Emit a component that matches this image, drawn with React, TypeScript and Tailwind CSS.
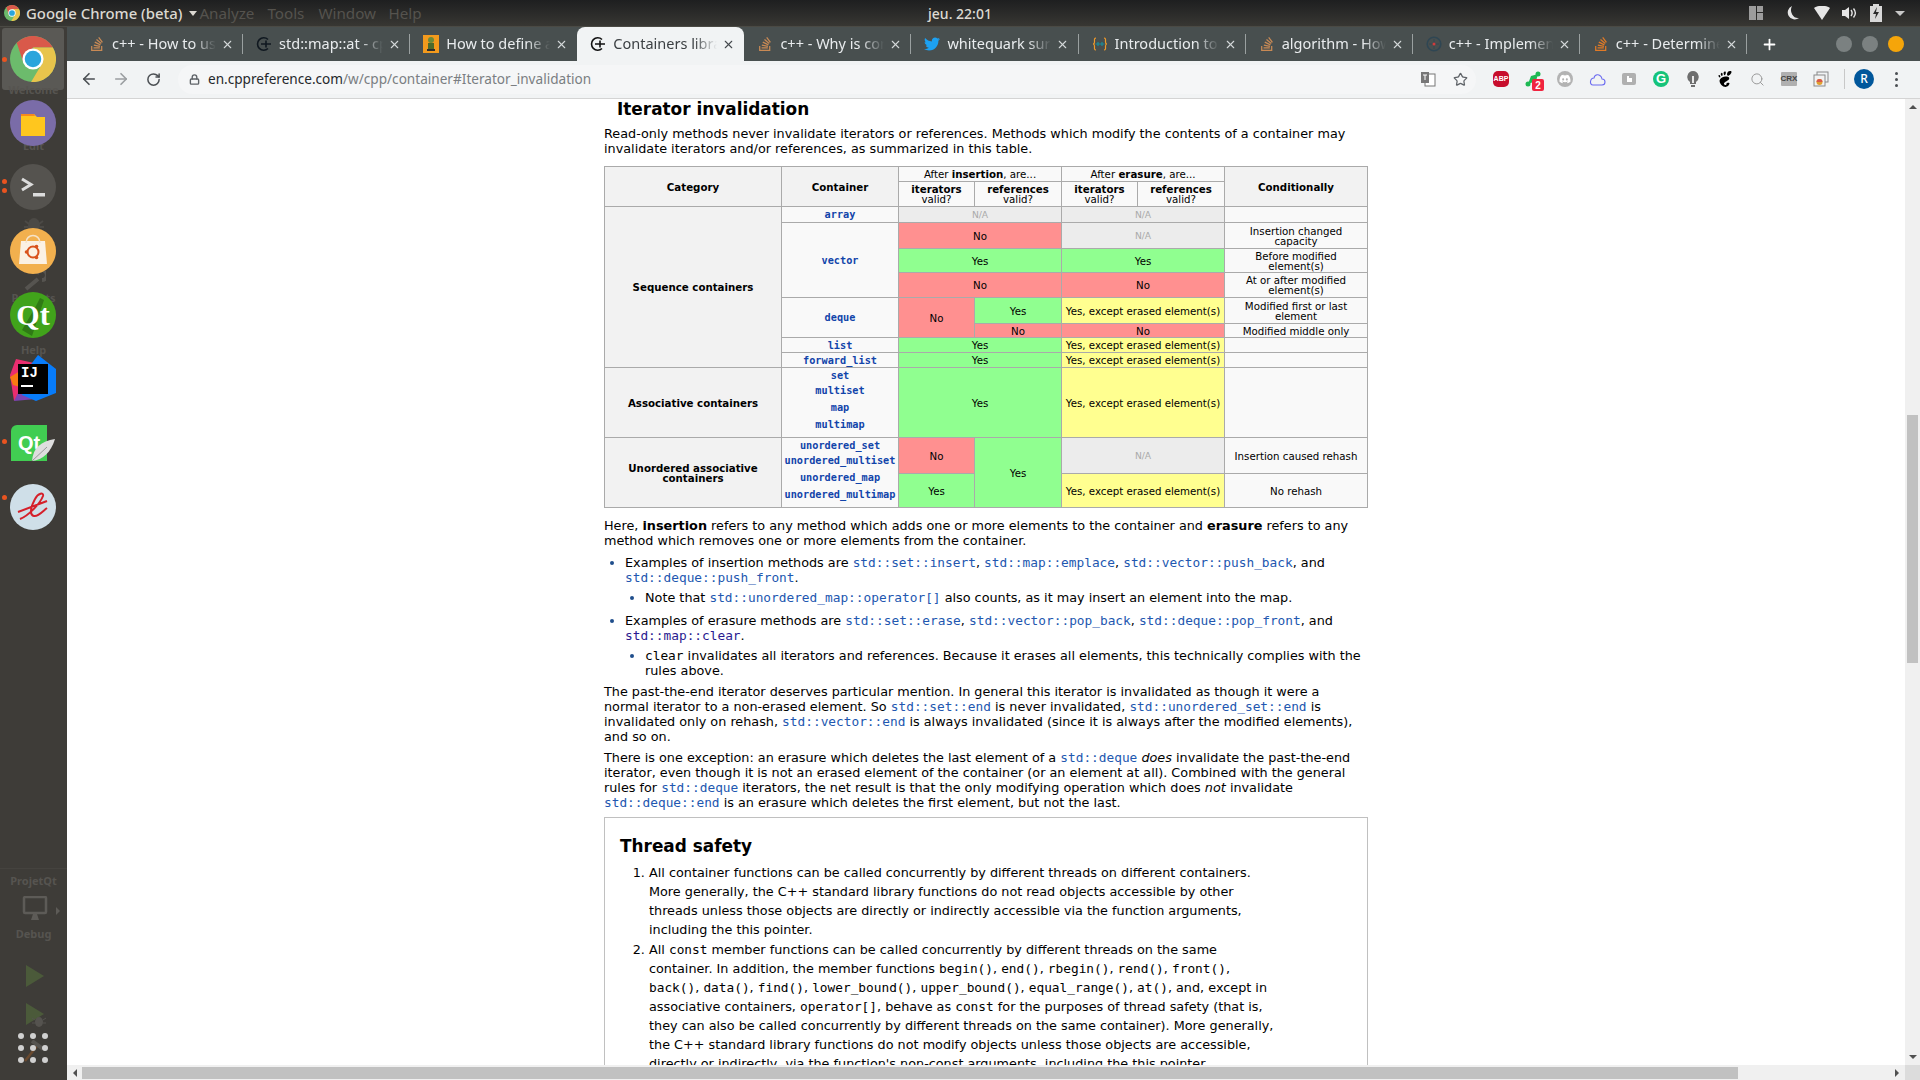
import React from "react";
import { ArrowLeft, ArrowRight, RotateCw, Lock, Star, Search, X, Plus } from "lucide-react";
import { FaTwitter, FaStackOverflow, FaDiscord } from "react-icons/fa";
import { SiGnome } from "react-icons/si";

const ChromeLogo = ({ size }: { size: number }) => (
  <svg width={size} height={size} viewBox="0 0 48 48">
    <circle cx="24" cy="24" r="24" fill="#6cbb6c" />
    <path d="M24 12H44.8A24 24 0 0 0 7 7L14 28Z" fill="#d9594a" />
    <path d="M44.8 12A24 24 0 0 1 22 48L34 28 24 12Z" fill="#e8c44c" />
    <circle cx="24" cy="24" r="11" fill="#fff" />
    <circle cx="24" cy="24" r="8.6" fill="#2aa5dc" />
  </svg>
);

const CppIcon = ({ color = "#111" }: { color?: string }) => (
  <svg width="16" height="16" viewBox="0 0 16 16" fill="none" stroke={color} strokeWidth="1.6">
    <path d="M12 3.5A6.2 6.2 0 1 0 12 12.5" />
    <path d="M5 8H15M10 4.5V11.5" />
  </svg>
);

const So = ({ dim }: { dim?: boolean }) => <FaStackOverflow className={dim ? "text-[#c98a55]" : "text-[#e07a27]"} size={16} />;

const TabIconOrange = () => (
  <svg width="16" height="18" viewBox="0 0 16 18">
    <rect width="16" height="18" fill="#f39a1d" />
    <circle cx="8" cy="5" r="3" fill="#6d8a3a" />
    <rect x="5" y="8" width="6" height="6" fill="#4c6a2c" />
    <rect x="4" y="14" width="8" height="2" fill="#2f2f2f" />
  </svg>
);
const BraceIcon = () => (
  <svg width="16" height="16" viewBox="0 0 16 16" fill="none" strokeWidth="1.2">
    <path d="M4 2C2 2 2.5 4 2.5 6S1 8 1 8 2.5 8 2.5 10 2 14 4 14M12 2C14 2 13.5 4 13.5 6S15 8 15 8 13.5 8 13.5 10 14 14 12 14" stroke="#f09a2a" />
    <path d="M3.5 8H12.5M6 6V10M10 6V10" stroke="#1b8d9c" />
  </svg>
);
const DimCircle = () => (
  <svg width="16" height="16" viewBox="0 0 16 16" fill="none">
    <circle cx="8" cy="8" r="6.8" stroke="#2f4653" strokeWidth="1.6" />
    <path d="M3 8H13M8 3V13" stroke="#2f4653" strokeWidth="0.8" />
    <circle cx="8" cy="8" r="1.5" fill="#d23b3b" />
  </svg>
);

const tabs: { icon: React.ReactNode; title: string; active?: boolean; noSep?: boolean }[] = [
  { icon: <So dim />, title: "c++ - How to use std::map" },
  { icon: <CppIcon color="#101820" />, title: "std::map::at - cppreference" },
  { icon: <TabIconOrange />, title: "How to define a custom", noSep: true },
  { icon: <CppIcon />, title: "Containers library - cpp", active: true, noSep: true },
  { icon: <So dim />, title: "c++ - Why is const" },
  { icon: <FaTwitter className="text-[#1da1f2]" size={16} />, title: "whitequark sur Twitter" },
  { icon: <BraceIcon />, title: "Introduction to the C++" },
  { icon: <So dim />, title: "algorithm - How does" },
  { icon: <DimCircle />, title: "c++ - Implementing" },
  { icon: <So />, title: "c++ - Determine if" },
];

const Tab = ({ t }: { t: (typeof tabs)[number] }) => (
  <div className={`relative flex h-full w-[167.1px] shrink-0 items-center pl-[13px] ${t.active ? "rounded-t-[8px] bg-[#f1f3f4] text-[#3c4043]" : "text-[#e9ecee]"}`}>
    <div className="flex w-[16px] justify-center">{t.icon}</div>
    <div className="ml-[7px] w-[104px] overflow-hidden whitespace-nowrap text-[14.5px] [mask-image:linear-gradient(to_right,black_78%,transparent)]" style={{ fontFamily: "'Noto Sans', sans-serif" }}>
      {t.title}
    </div>
    <X size={13} strokeWidth={2} className={`ml-[5px] ${t.active ? "text-[#45494d]" : "text-[#d4d8da]"}`} />
    {!t.active && !t.noSep && <div className="absolute right-0 top-[7px] h-[20px] w-px bg-[#9aa0a0]" />}
  </div>
);

const Ext = ({ children }: { children: React.ReactNode }) => (
  <div className="relative flex h-[28px] w-[32px] items-center justify-center">{children}</div>
);

const Dot = ({ y }: { y: number }) => (
  <div className="absolute left-[2px] h-[5px] w-[5px] rounded-full bg-[#e95420]" style={{ top: y }} />
);

const Ghost = ({ y, children }: { y: number; children: string }) => (
  <div className="absolute left-0 w-[67px] text-center text-[11px] font-bold text-[#565450]" style={{ top: y, fontFamily: "'Noto Sans', sans-serif" }}>
    {children}
  </div>
);

const DockItem = ({ children }: { children: React.ReactNode }) => (
  <div className="relative flex h-[64px] w-[66px] items-center justify-center">{children}</div>
);

const Sidebar = () => (
  <div className="relative w-[67px] shrink-0 overflow-hidden bg-[#3e3c38]">
    <div className="absolute left-[2px] top-[1px] h-[62px] w-[62px] rounded-[3px] bg-[#5a5955]" />
    <Ghost y={55}>Welcome</Ghost>
    <Ghost y={111}>Edit</Ghost>
    <Ghost y={263}>Projects</Ghost>
    <Ghost y={315}>Help</Ghost>
    <svg className="absolute left-[24px] top-[188px]" width="20" height="20" viewBox="0 0 20 20"><ellipse cx="10" cy="11" rx="6" ry="8" fill="#4c4a46" /><path d="M1 6 5 9M19 6 15 9M0 12H4M20 12H16" stroke="#4c4a46" strokeWidth="2" /></svg>
    <svg className="absolute left-[24px] top-[244px]" width="22" height="20" viewBox="0 0 22 20"><path d="M2 18 14 8M13 3a5 5 0 1 1 5 6" stroke="#565450" strokeWidth="4" fill="none" /></svg>
    <div className="relative flex flex-col">
      <DockItem><ChromeLogo size={46} /></DockItem>
      <DockItem>
        <svg width="46" height="46" viewBox="0 0 46 46">
          <circle cx="23" cy="23" r="23" fill="#7a6ca8" />
          <path d="M11 14H24L27 17H35V36H11Z" fill="#ffc61e" />
          <path d="M11 14H24L25 16H11Z" fill="#f5891f" />
        </svg>
      </DockItem>
      <DockItem>
        <svg width="46" height="46" viewBox="0 0 46 46" fill="none">
          <circle cx="23" cy="23" r="23" fill="#55534f" />
          <path d="M12 15 21 20.5 12 26" stroke="#dcdcdc" strokeWidth="3" />
          <rect x="23" y="29" width="12" height="3.5" fill="#dcdcdc" />
        </svg>
      </DockItem>
      <DockItem>
        <svg width="46" height="46" viewBox="0 0 46 46" fill="none">
          <circle cx="23" cy="23" r="23" fill="#f2b04e" />
          <path d="M11 13H35L37 36H9Z" fill="#fbf1e4" />
          <path d="M16 15C16 5 30 5 30 15" stroke="#f6e3c8" strokeWidth="1.5" />
          <circle cx="23" cy="24" r="5.5" stroke="#d9531e" strokeWidth="2" />
          <circle cx="16.5" cy="24" r="1.8" fill="#d9531e" />
          <circle cx="26.5" cy="18.5" r="1.8" fill="#d9531e" />
          <circle cx="26.5" cy="29.5" r="1.8" fill="#d9531e" />
        </svg>
      </DockItem>
      <DockItem>
        <div className="relative flex h-[46px] w-[46px] items-center justify-center overflow-hidden rounded-full bg-[#41a31b] text-[30px] font-bold leading-none text-white" style={{ fontFamily: "'Liberation Serif', serif" }}>
          <svg className="absolute left-0 top-0" width="46" height="46" viewBox="0 0 46 46"><path d="M12 38 22 44 34 8 30 6 26 14Z" fill="#2f7a15" /></svg>
          <span className="relative">Qt</span>
        </div>
      </DockItem>
      <DockItem>
        <div className="relative h-[48px] w-[46px]">
          <svg className="absolute left-0 top-0" width="46" height="48" viewBox="0 0 46 48">
            <path d="M6 4 24 8 18 30 4 46 0 20Z" fill="#ea2d6f" />
            <path d="M0 22 10 16 10 32 3 30Z" fill="#f97a12" />
            <path d="M4 46 14 26 26 44Z" fill="#7b44b5" />
            <path d="M28 0 46 14 46 38 26 46 12 40 16 16Z" fill="#087cfa" />
          </svg>
          <div className="absolute left-[8px] top-[9px] h-[30px] w-[30px] bg-black px-[3px] pt-[2px] text-[14px] font-bold leading-[14px] text-white" style={{ fontFamily: "'Liberation Mono', monospace" }}>
            IJ
            <div className="mt-[5px] h-[2px] w-[12px] bg-white" />
          </div>
        </div>
      </DockItem>
      <DockItem>
        <div className="relative h-[37px] w-[44px]">
          <div className="flex h-[36px] w-[36px] items-center justify-center rounded-tl-[6px] bg-[#41cd52] text-[20px] font-bold leading-none text-white" style={{ fontFamily: "'Liberation Sans', sans-serif" }}>Qt</div>
          <svg className="absolute right-0 top-[13px]" width="24" height="24" viewBox="0 0 24 24"><path d="M24 1C10 3 2 10 1 23 12 22 20 14 24 1Z" fill="#dedede" /><path d="M1 23 16 9" stroke="#999" /></svg>
        </div>
      </DockItem>
      <DockItem>
        <svg width="46" height="46" viewBox="0 0 46 46" fill="none">
          <circle cx="23" cy="23" r="23" fill="#cfdfe8" />
          <path d="M10 35C18 32 30 20 33 12 34 8 28 9 25 15 21 22 19 31 24 32 28 33 33 27 37 24M8 28 37 17" stroke="#d5202a" strokeWidth="2" />
        </svg>
      </DockItem>
    </div>
    <div className="absolute left-0 top-[841px] h-[1px] w-full bg-[#45433f]" />
    <Ghost y={846}>ProjetQt</Ghost>
    <svg className="absolute left-[22px] top-[869px]" width="26" height="26" viewBox="0 0 26 26" fill="none"><rect x="2" y="1" width="22" height="16" rx="1" stroke="#5d5b57" strokeWidth="2.5" /><path d="M9 24 11 18H15L17 24Z" fill="#5d5b57" /></svg>
    <div className="absolute left-[56px] top-[880px] h-0 w-0 border-y-[4px] border-l-[4px] border-y-transparent border-l-[#5d5b57]" />
    <Ghost y={899}>Debug</Ghost>
    <div className="absolute left-[26px] top-[938px] h-0 w-0 border-y-[11px] border-l-[18px] border-y-transparent border-l-[#4b5a3a]" />
    <div className="absolute left-[26px] top-[976px] h-0 w-0 border-y-[11px] border-l-[18px] border-y-transparent border-l-[#4b5a3a]" />
    <svg className="absolute left-[32px] top-[987px]" width="14" height="14" viewBox="0 0 14 14"><ellipse cx="7" cy="8" rx="4" ry="5" fill="#55534f" /><path d="M0 4 3 6M14 4 11 6M0 9H3M14 9H11" stroke="#55534f" /></svg>
    <svg className="absolute left-[24px] top-[1013px]" width="20" height="22" viewBox="0 0 20 22" fill="none"><path d="M1 21 13 6" stroke="#6b4a2f" strokeWidth="2.5" /><path d="M8 1 19 9" stroke="#565450" strokeWidth="4" /></svg>
    <div className="absolute left-[18px] top-[1006px] grid grid-cols-3 gap-x-[6px] gap-y-[6px]">
      {Array.from({ length: 9 }).map((_, i) => (
        <div key={i} className="h-[6px] w-[6px] rounded-full bg-[#d0d0d0]" />
      ))}
    </div>
    <Dot y={30} />
    <Dot y={152} />
    <Dot y={161} />
    <Dot y={412} />
    <Dot y={468} />
  </div>
);

const TopBar = () => (
  <div className="relative flex h-[27px] shrink-0 items-center border-b border-[#4b4a44] bg-gradient-to-b from-[#1e1f20] to-[#383733] text-[#dcd9d2]" style={{ fontFamily: "'Noto Sans', sans-serif" }}>
    <div className="ml-[4px]"><ChromeLogo size={16} /></div>
    <span className="ml-[6px] text-[14.9px] font-medium leading-none">Google Chrome (beta)</span>
    <div className="ml-[7px] h-0 w-0 border-x-[4.5px] border-t-[5px] border-x-transparent border-t-[#dcd9d2]" />
    <div className="ml-[2px] flex text-[15.2px] text-[#55534e]">
      <span className="w-[68px]">Analyze</span>
      <span className="w-[51px]">Tools</span>
      <span className="w-[70px]">Window</span>
      <span>Help</span>
    </div>
    <div className="absolute left-0 right-0 top-[5px] text-center text-[14px] font-medium leading-[17px]">jeu. 22:01</div>
    <div className="ml-auto flex items-center">
      <svg width="16" height="16" viewBox="0 0 16 16" fill="#9c9c9c" className="mr-[21px]"><rect x="1" y="1" width="7" height="14" /><rect x="9" y="1" width="6" height="6" /><rect x="9" y="8" width="6" height="7" /></svg>
      <svg width="16" height="16" viewBox="0 0 16 16" fill="#e6e6e6" className="mr-[13px]"><path d="M7 1A7 7 0 1 0 14 13 7 8 0 0 1 7 1Z" /></svg>
      <svg width="16" height="14" viewBox="0 0 16 14" fill="#e6e6e6" className="mr-[12px]"><path d="M0 2C4-1 12-1 16 2L8 14Z" /></svg>
      <svg width="16" height="14" viewBox="0 0 16 14" fill="none" className="mr-[12px]"><path d="M0 4H3L7 1V13L3 10H0Z" fill="#e6e6e6" /><path d="M9 4C10.5 6 10.5 8 9 10M11.5 2.5C14 5.5 14 8.5 11.5 11.5" stroke="#e6e6e6" strokeWidth="1.4" /></svg>
      <svg width="12" height="18" viewBox="0 0 12 18" className="mr-[13px]"><path d="M0 2H3V0H9V2H12V18H0Z" fill="#d8d8d8" /><path d="M7 3 3 10H6L5 15 9 8H6Z" fill="#2a2a2a" /></svg>
      <div className="mr-[15px] h-0 w-0 border-x-[5px] border-t-[5px] border-x-transparent border-t-[#c8c8c8]" />
    </div>
  </div>
);

const TabBar = () => (
  <div className="flex h-[34px] shrink-0 items-center bg-[#484f4f] pl-[9px]">
    {tabs.map((t) => <Tab key={t.title} t={t} />)}
    <Plus size={17} strokeWidth={2.5} className="ml-[14px] text-white" />
    <div className="ml-[58px] h-[16px] w-[16px] rounded-full bg-[#7b8181]" />
    <div className="ml-[10px] h-[16px] w-[16px] rounded-full bg-[#7b8181]" />
    <div className="ml-[10px] h-[16px] w-[16px] rounded-full bg-[#f5a50a]" />
  </div>
);

const Toolbar = () => (
  <div className="flex h-[38px] shrink-0 items-center border-b border-[#d4d4d4] bg-[#f1f3f4] pb-[1px] pl-[6px]">
    <div className="flex w-[32px] justify-center"><ArrowLeft size={18} strokeWidth={2.2} className="text-[#4b4f53]" /></div>
    <div className="flex w-[32px] justify-center"><ArrowRight size={18} strokeWidth={2.2} className="text-[#9a9da0]" /></div>
    <div className="flex w-[32px] justify-center"><RotateCw size={15} strokeWidth={2.4} className="text-[#4b4f53]" /></div>
    <div className="ml-[9px] flex h-[29px] w-[1298px] items-center rounded-full bg-[#f5f6f7] pl-[11px]">
      <Lock size={11} strokeWidth={3} className="text-[#5f6368]" />
      <div className="ml-[8px] text-[13.6px] text-[#7a7e82]" style={{ fontFamily: "'Noto Sans', sans-serif" }}>
        <span className="text-[#25282b]">en.cppreference.com</span>/w/cpp/container#Iterator_invalidation
      </div>
      <div className="ml-auto flex">
        <Ext>
          <svg width="16" height="16" viewBox="0 0 16 16"><rect x="5" y="3" width="10" height="12" fill="#fff" stroke="#777" /><rect x="1" y="1" width="8" height="11" fill="#777" /><path d="M3 4H7M5 4V9M9 8 13 12" stroke="#fff" /></svg>
        </Ext>
        <Ext><Star size={15} strokeWidth={2} className="text-[#5f6368]" /></Ext>
      </div>
    </div>
    <div className="ml-[9px] flex">
      <Ext>
        <div className="flex h-[16px] w-[16px] items-center justify-center rounded-[5px] bg-[#c70d2c] text-[7px] font-bold text-white" style={{ fontFamily: "'Liberation Sans', sans-serif" }}>ABP</div>
      </Ext>
      <Ext>
        <svg width="16" height="16" viewBox="0 0 16 16" fill="#1eb954"><circle cx="3" cy="13" r="2.5" /><circle cx="13" cy="3" r="2.5" /><path d="M3 13 6 5 13 3 11 10Z" /></svg>
        <div className="absolute left-[15px] top-[14px] flex h-[12px] w-[12px] items-center justify-center rounded-[2px] bg-[#f0243f] text-[10px] font-bold text-white" style={{ fontFamily: "'Liberation Sans', sans-serif" }}>2</div>
      </Ext>
      <Ext><div className="flex h-[16px] w-[16px] items-center justify-center rounded-full bg-[#b3b3b3]"><FaDiscord size={12} className="text-white" /></div></Ext>
      <Ext>
        <svg width="17" height="13" viewBox="0 0 17 13" fill="none" stroke="#6b6bf0" strokeWidth="1.1"><path d="M4 12H13C17 12 17 6 13 6 12 1 6 0 5 5 1 5 0 12 4 12Z" /></svg>
      </Ext>
      <Ext>
        <svg width="14" height="12" viewBox="0 0 14 12"><rect width="14" height="12" rx="2" fill="#b0b0b0" /><path d="M5 3V9H10V5H7V3Z" fill="#fff" /></svg>
      </Ext>
      <Ext><div className="flex h-[16px] w-[16px] items-center justify-center rounded-full bg-[#15c37a] text-[13px] font-bold text-white" style={{ fontFamily: "'Liberation Sans', sans-serif" }}>G</div></Ext>
      <Ext>
        <svg width="12" height="16" viewBox="0 0 12 16"><path d="M6 0A6 6 0 0 1 9 11V13H3V11A6 6 0 0 1 6 0Z" fill="#6e6e6e" /><rect x="4" y="14" width="4" height="2" fill="#6e6e6e" /><rect x="5" y="5" width="2" height="7" fill="#e8e8e8" /></svg>
      </Ext>
      <Ext><SiGnome size={16} className="text-black" /></Ext>
      <Ext><Search size={15} strokeWidth={1.6} className="text-[#9a9a9a]" /></Ext>
      <Ext><div className="flex h-[14px] w-[16px] items-center justify-center rounded-[1px] bg-[#b0b0b0] text-[8px] font-bold text-[#444]" style={{ fontFamily: "'Liberation Sans', sans-serif" }}>CRX</div></Ext>
      <Ext>
        <svg width="16" height="16" viewBox="0 0 16 16" fill="none"><rect x="4" y="1" width="11" height="10" stroke="#8a8a8a" /><rect x="1" y="4" width="11" height="11" fill="#f2f2f2" stroke="#8a8a8a" /><circle cx="6.5" cy="11" r="3" fill="#e0a030" /><path d="M3.5 11A3 3 0 0 1 9.5 11Z" fill="#d9594a" /></svg>
      </Ext>
    </div>
    <div className="ml-[7px] h-[20px] w-px bg-[#c8c8c8]" />
    <div className="ml-[9px] flex h-[20px] w-[20px] items-center justify-center rounded-full bg-[#01579b] text-[12px] font-medium text-white" style={{ fontFamily: "'Noto Sans', sans-serif" }}>R</div>
    <div className="ml-[21px] flex flex-col gap-[3px]">
      <div className="h-[3px] w-[3px] rounded-full bg-[#4b4f53]" />
      <div className="h-[3px] w-[3px] rounded-full bg-[#4b4f53]" />
      <div className="h-[3px] w-[3px] rounded-full bg-[#4b4f53]" />
    </div>
  </div>
);

const B = "border border-[#aaaaaa]";
type CellProps = React.TdHTMLAttributes<HTMLTableCellElement> & { children?: React.ReactNode };
const Th = ({ children, ...p }: CellProps) => (
  <th {...p} className={`${B} bg-[#f2f2f2] px-[2px] text-center font-bold`}>{children}</th>
);
const Sub = ({ children, ...p }: CellProps) => (
  <td {...p} className={`${B} bg-[#f9f9f9] px-[2px] text-center`}>{children}</td>
);
const Yes = (p: CellProps) => <td {...p} className={`${B} bg-[#90ff90] px-[2px] text-center`}>Yes</td>;
const No = (p: CellProps) => <td {...p} className={`${B} bg-[#ff9090] px-[2px] text-center`}>No</td>;
const Na = (p: CellProps) => <td {...p} className={`${B} bg-[#ececec] px-[2px] text-center text-[9.2px] text-[#aaaaaa]`}>N/A</td>;
const Exc = (p: CellProps) => <td {...p} className={`${B} whitespace-nowrap bg-[#ffff90] px-0 text-center`}>Yes, except erased element(s)</td>;
const Cn = ({ children, className = "" }: { children: React.ReactNode; className?: string }) => (
  <div className={`font-['DejaVu_Sans_Mono',monospace] text-[10.24px] font-bold leading-[13px] text-[#1144aa] ${className}`}>{children}</div>
);

const InvalidationTable = () => (
  <table className="mt-[10px] w-[763px] table-fixed border-collapse text-[10.24px] leading-[10px]">
    <colgroup>
      <col className="w-[177px]" /><col className="w-[117px]" /><col className="w-[76px]" /><col className="w-[87px]" /><col className="w-[76px]" /><col className="w-[87px]" /><col className="w-[143px]" />
    </colgroup>
    <tbody>
      <tr className="h-[15px]">
        <Th rowSpan={2}>Category</Th>
        <Th rowSpan={2}>Container</Th>
        <Sub colSpan={2}>After <b>insertion</b>, are...</Sub>
        <Sub colSpan={2}>After <b>erasure</b>, are...</Sub>
        <Th rowSpan={2}>Conditionally</Th>
      </tr>
      <tr className="h-[25px]">
        <Sub><b>iterators</b><br />valid?</Sub>
        <Sub><b>references</b><br />valid?</Sub>
        <Sub><b>iterators</b><br />valid?</Sub>
        <Sub><b>references</b><br />valid?</Sub>
      </tr>
      <tr className="h-[16px]">
        <Th rowSpan={8}>Sequence containers</Th>
        <Sub><Cn>array</Cn></Sub>
        <Na colSpan={2} />
        <Na colSpan={2} />
        <Sub />
      </tr>
      <tr className="h-[26px]">
        <Sub rowSpan={3}><Cn>vector</Cn></Sub>
        <No colSpan={2} />
        <Na colSpan={2} />
        <Sub>Insertion changed capacity</Sub>
      </tr>
      <tr className="h-[24px]">
        <Yes colSpan={2} />
        <Yes colSpan={2} />
        <Sub>Before modified<br />element(s)</Sub>
      </tr>
      <tr className="h-[25px]">
        <No colSpan={2} />
        <No colSpan={2} />
        <Sub>At or after modified<br />element(s)</Sub>
      </tr>
      <tr className="h-[26px]">
        <Sub rowSpan={2}><Cn>deque</Cn></Sub>
        <No rowSpan={2} />
        <Yes />
        <Exc colSpan={2} />
        <Sub>Modified first or last<br />element</Sub>
      </tr>
      <tr className="h-[14px]">
        <No />
        <No colSpan={2} />
        <Sub>Modified middle only</Sub>
      </tr>
      <tr className="h-[15px]">
        <Sub><Cn>list</Cn></Sub>
        <Yes colSpan={2} />
        <Exc colSpan={2} />
        <Sub />
      </tr>
      <tr className="h-[15px]">
        <Sub><Cn>forward_list</Cn></Sub>
        <Yes colSpan={2} />
        <Exc colSpan={2} />
        <Sub />
      </tr>
      <tr className="h-[70px]">
        <Th>Associative containers</Th>
        <Sub>
          <Cn>set</Cn>
          <Cn className="mt-[2px]">multiset</Cn>
          <Cn className="mt-[4px]">map</Cn>
          <Cn className="mb-[5px] mt-[4px]">multimap</Cn>
        </Sub>
        <Yes colSpan={2} />
        <Exc colSpan={2} />
        <Sub />
      </tr>
      <tr className="h-[36px]">
        <Th rowSpan={2}>Unordered associative<br />containers</Th>
        <Sub rowSpan={2}>
          <Cn>unordered_set</Cn>
          <Cn className="mt-[2px]">unordered_multiset</Cn>
          <Cn className="mt-[4px]">unordered_map</Cn>
          <Cn className="mb-[5px] mt-[4px]">unordered_multimap</Cn>
        </Sub>
        <No />
        <Yes rowSpan={2} />
        <Na colSpan={2} />
        <Sub>Insertion caused rehash</Sub>
      </tr>
      <tr className="h-[34px]">
        <Yes />
        <Exc colSpan={2} />
        <Sub>No rehash</Sub>
      </tr>
    </tbody>
  </table>
);

const L = ({ children, v }: { children: React.ReactNode; v?: boolean }) => (
  <span className={`font-['DejaVu_Sans_Mono',monospace] ${v ? "text-[#2a1a90]" : "text-[#2257b0]"}`}>{children}</span>
);
const M = ({ children }: { children: React.ReactNode }) => <span className="font-['DejaVu_Sans_Mono',monospace]">{children}</span>;

const Article = () => (
  <div className="w-[764px] text-[12.8px] leading-[15px] text-black" style={{ fontFamily: "'DejaVu Sans', sans-serif" }}>
    <h2 className="h-[20px] pl-[13px] text-[16.9px] font-bold leading-[20px]">Iterator invalidation</h2>
    <p className="mt-[7px]">Read-only methods never invalidate iterators or references. Methods which modify the contents of a container may invalidate iterators and/or references, as summarized in this table.</p>
    <InvalidationTable />
    <p className="mt-[10px]">Here, <b>insertion</b> refers to any method which adds one or more elements to the container and <b>erasure</b> refers to any method which removes one or more elements from the container.</p>
    <ul className="ml-[21px] list-disc marker:text-[#1f4e8c]">
      <li className="mt-[7px]">
        Examples of insertion methods are <L>std::set::insert</L>, <L>std::map::emplace</L>, <L>std::vector::push_back</L>, and <L>std::deque::push_front</L>.
        <ul className="ml-[20px] list-disc">
          <li className="mt-[5px]">Note that <L>std::unordered_map::operator[]</L> also counts, as it may insert an element into the map.</li>
        </ul>
      </li>
      <li className="mt-[8px]">
        Examples of erasure methods are <L>std::set::erase</L>, <L>std::vector::pop_back</L>, <L>std::deque::pop_front</L>, and <L v>std::map::clear</L>.
        <ul className="ml-[20px] list-disc">
          <li className="mt-[5px]"><M>clear</M> invalidates all iterators and references. Because it erases all elements, this technically complies with the rules above.</li>
        </ul>
      </li>
    </ul>
    <p className="mt-[6px]">The past-the-end iterator deserves particular mention. In general this iterator is invalidated as though it were a normal iterator to a non-erased element. So <L>std::set::end</L> is never invalidated, <L>std::unordered_set::end</L> is invalidated only on rehash, <L>std::vector::end</L> is always invalidated (since it is always after the modified elements), and so on.</p>
    <p className="mt-[6px]">There is one exception: an erasure which deletes the last element of a <L>std::deque</L> <i>does</i> invalidate the past-the-end iterator, even though it is not an erased element of the container (or an element at all). Combined with the general rules for <L>std::deque</L> iterators, the net result is that the only modifying operation which does <i>not</i> invalidate <L>std::deque::end</L> is an erasure which deletes the first element, but not the last.</p>
    <div className="mt-[7px] border border-[#c0c0c0] bg-white pb-[20px] pl-[15px] pt-[18px]">
      <h3 className="text-[16.9px] font-bold leading-[20px]">Thread safety</h3>
      <ol className="ml-[29px] mt-[7px] w-[626px] list-decimal leading-[19px]">
        <li>All container functions can be called concurrently by different threads on different containers. More generally, the C++ standard library functions do not read objects accessible by other threads unless those objects are directly or indirectly accessible via the function arguments, including the this pointer.</li>
        <li className="mt-[1px]">All <M>const</M> member functions can be called concurrently by different threads on the same container. In addition, the member functions <M>begin()</M>, <M>end()</M>, <M>rbegin()</M>, <M>rend()</M>, <M>front()</M>, <M>back()</M>, <M>data()</M>, <M>find()</M>, <M>lower_bound()</M>, <M>upper_bound()</M>, <M>equal_range()</M>, <M>at()</M>, and, except in associative containers, <M>operator[]</M>, behave as <M>const</M> for the purposes of thread safety (that is, they can also be called concurrently by different threads on the same container). More generally, the C++ standard library functions do not modify objects unless those objects are accessible, directly or indirectly, via the function's non-const arguments, including the this pointer.</li>
      </ol>
    </div>
  </div>
);

const VScroll = () => (
  <div className="flex w-[15px] shrink-0 flex-col bg-[#f0f0f0]">
    <div className="mx-auto mt-[6px] h-0 w-0 border-x-[4px] border-b-[4px] border-x-transparent border-b-[#505050]" />
    <div className="mx-[2px] mt-[306px] h-[248px] bg-[#c1c1c1]" />
    <div className="mx-auto mb-[6px] mt-auto h-0 w-0 border-x-[4px] border-t-[4px] border-x-transparent border-t-[#505050]" />
  </div>
);

const HScroll = () => (
  <div className="flex h-[15px] shrink-0 items-center bg-[#f0f0f0]">
    <div className="ml-[6px] h-0 w-0 border-y-[4px] border-r-[4px] border-y-transparent border-r-[#505050]" />
    <div className="ml-[5px] h-[12px] w-[1656px] bg-[#c1c1c1]" />
    <div className="ml-auto mr-[6px] h-0 w-0 border-y-[4px] border-l-[4px] border-y-transparent border-l-[#505050]" />
    <div className="h-full w-[15px] bg-[#dcdcdc]" />
  </div>
);

export default function App() {
  return (
    <div className="flex h-screen w-screen flex-col overflow-hidden bg-white">
      <TopBar />
      <div className="flex min-h-0 flex-1">
        <Sidebar />
        <div className="flex min-w-0 flex-1 flex-col">
          <TabBar />
          <Toolbar />
          <div className="flex min-h-0 flex-1">
            <div className="min-w-0 flex-1 overflow-hidden bg-white pl-[537px]">
              <Article />
            </div>
            <VScroll />
          </div>
          <HScroll />
        </div>
      </div>
    </div>
  );
}
